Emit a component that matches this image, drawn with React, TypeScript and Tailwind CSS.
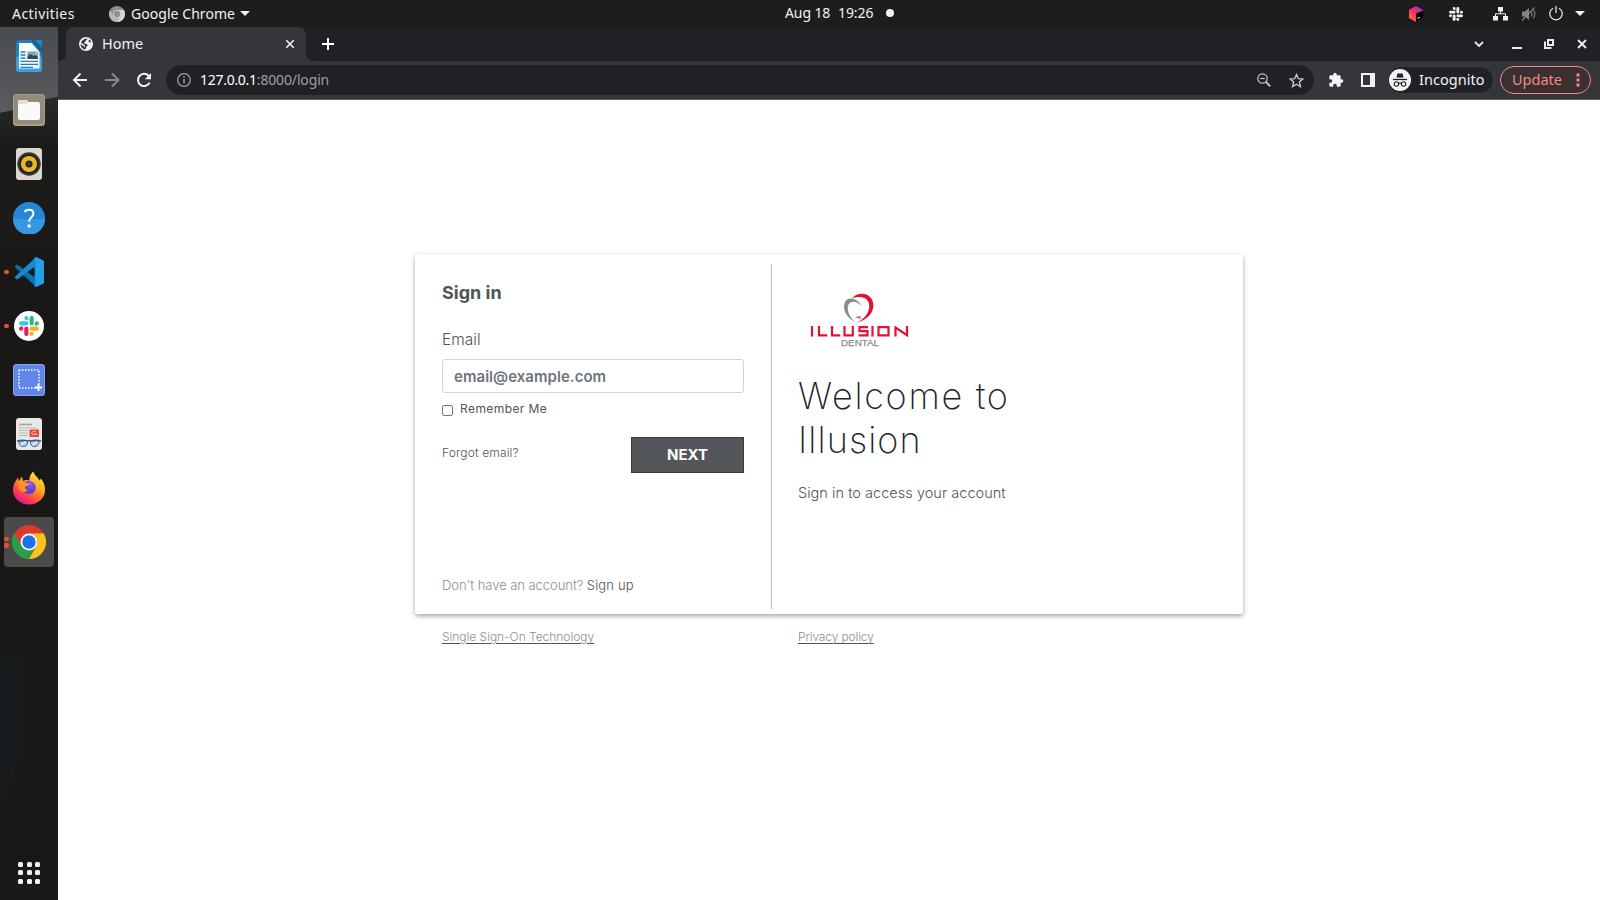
import type { ReactNode } from "react";

const ui = "font-['Noto_Sans',sans-serif]";

function ChromeLogo({ size, mono = false }: { size: number; mono?: boolean }) {
  const c = mono ? ["#8d8d8d", "#b5b5b5", "#d6d6d6", "#8f8f8f"] : ["#db3a2e", "#2a9d49", "#fcc31e", "#1b73e8"];
  return (
    <svg width={size} height={size} viewBox="0 0 48 48">
      <circle cx="24" cy="24" r="24" fill={c[0]} />
      <path d="M3.2 12A24 24 0 0 0 24 48L34.4 30A12 12 0 0 1 13.6 30Z" fill={c[1]} />
      <path d="M24 48A24 24 0 0 0 44.8 12H24A12 12 0 0 1 34.4 30Z" fill={c[2]} />
      <circle cx="24" cy="24" r="12" fill={mono ? "#d8d8d8" : "#fff"} />
      <circle cx="24" cy="24" r="9.5" fill={c[3]} />
    </svg>
  );
}

function SlackLogo({ size, white = false }: { size: number; white?: boolean }) {
  const [r, b, g, y] = white ? ["#eee", "#eee", "#eee", "#eee"] : ["#e01e5a", "#36c5f0", "#2eb67d", "#ecb22e"];
  return (
    <svg width={size} height={size} viewBox="0 0 24 24">
      <path fill={r} d="M5 15.2a2.5 2.5 0 1 1-2.5-2.5H5zm1.3 0a2.5 2.5 0 0 1 5 0v6.3a2.5 2.5 0 1 1-5 0z" />
      <path fill={b} d="M8.8 5a2.5 2.5 0 1 1 2.5-2.5V5zm0 1.3a2.5 2.5 0 0 1 0 5H2.5a2.5 2.5 0 1 1 0-5z" />
      <path fill={g} d="M19 8.8a2.5 2.5 0 1 1 2.5 2.5H19zm-1.3 0a2.5 2.5 0 0 1-5 0V2.5a2.5 2.5 0 1 1 5 0z" />
      <path fill={y} d="M15.2 19a2.5 2.5 0 1 1-2.5 2.5V19zm0-1.3a2.5 2.5 0 0 1 0-5h6.3a2.5 2.5 0 1 1 0 5z" />
    </svg>
  );
}

function WriterIcon() {
  return (
    <svg width="28" height="34" viewBox="0 0 28 34">
      <rect x="1" y="1" width="26" height="32" rx="3.5" fill="#1b80bd" />
      <rect x="1" y="17" width="26" height="16" rx="3.5" fill="#3ba1da" />
      <path d="M4 4h12.500L24.500 13v16.500H4z" fill="#fafafa" />
      <path d="M16.500 1H24l3 3v11z" fill="#155f92" />
      <path d="M20 1h7v8z" fill="#1a86c4" />
      <path d="M5.500 13h5M5.500 16h5M5.500 19h5M5.500 22.300h17.500M5.500 25.300h17.500M5.500 28.300h12.500" stroke="#1c80c2" strokeWidth="1.3" />
      <rect x="12.500" y="12.500" width="10.500" height="7.500" fill="#5aaee3" />
      <path d="M12.500 20v-3l3-2 3 2 2-1 2.500 2v2z" fill="#444" />
      <circle cx="21.200" cy="14.200" r="1.2" fill="#f0c420" />
    </svg>
  );
}

function FilesIcon() {
  return (
    <svg width="32" height="32" viewBox="0 0 32 32">
      <rect width="32" height="32" rx="3.5" fill="#aaa28e" />
      <rect x=".8" y=".8" width="30.4" height="29.5" rx="3" fill="#948c7b" />
      <path d="M5 8q0-2 2-2h6q1.500 0 2 2h10q2 0 2 2v14q0 2-2 2H7q-2 0-2-2z" fill="#fafafa" />
      <path d="M5 10V8q0-2 2-2h6q1.500 0 2 2l-2 2z" fill="#e2dfd8" />
    </svg>
  );
}

function RhythmboxIcon() {
  return (
    <svg width="28" height="34" viewBox="0 0 28 34">
      <rect x="1" y="1" width="26" height="32" rx="3" fill="#ddd7ce" />
      <circle cx="14" cy="17" r="11.7" fill="#34363a" />
      <circle cx="14" cy="17" r="10" fill="#202226" />
      <circle cx="14" cy="17" r="8" fill="#f0b818" />
      <circle cx="14" cy="17" r="3.6" fill="#1d2a33" />
      <circle cx="14" cy="17" r="1.3" fill="#454a4e" />
    </svg>
  );
}

function HelpIcon() {
  return (
    <svg width="32" height="32" viewBox="0 0 32 32">
      <circle cx="16" cy="16" r="16" fill="#2487d6" />
      <path d="M0 17h32a16 16 0 0 1-32 0z" fill="#3798e2" />
      <path d="M11.700 10c.8-1.600 2.400-2.200 4.300-2.200 2.700 0 4.400 1.400 4.400 3.700 0 3.900-4.300 3.800-4.300 8.200" fill="none" stroke="#fff" strokeWidth="2" />
      <circle cx="16.100" cy="24" r="1.7" fill="#fff" />
    </svg>
  );
}

function CodeIcon() {
  return (
    <svg width="30" height="30" viewBox="0 0 30 30">
      <path d="M.5 9.800L2.300 8q.9-.6 1.700 0L28.500 26 22 30z" fill="#0d6fb5" />
      <path d="M.5 20.200L2.300 22q.9.6 1.700 0L28.500 4 22 0z" fill="#1688cc" />
      <path d="M22 0l7 3.200q1 .5 1 1.500v20.600q0 1-1 1.500L22 30z" fill="#24a0ea" />
      <path d="M20.500.8L22 0v30l-1.500-.8z" fill="#1c92da" />
    </svg>
  );
}

function ScreenshotIcon() {
  return (
    <svg width="32" height="32" viewBox="0 0 32 32">
      <rect width="32" height="32" rx="3.5" fill="#5f86e8" />
      <rect x=".5" y=".5" width="31" height="31" rx="3" fill="none" stroke="#86a4f0" />
      <path d="M6 6h20v15M6 6v18h16" fill="none" stroke="#fff" strokeWidth="1.5" strokeDasharray="1.5 1.5" />
      <path d="M25.500 20v7M22 23.500h7" stroke="#fff" strokeWidth="1.8" />
    </svg>
  );
}

function ReaderIcon() {
  return (
    <svg width="28" height="34" viewBox="0 0 28 34">
      <rect x="1" y="1" width="26" height="32" rx="3" fill="#e9e8e6" />
      <path d="M4 7.500h13" stroke="#aaa793" strokeWidth="1.6" />
      <path d="M4 11h18M4 13.500h9M4 16h9M4 18.500h9" stroke="#bbb9b1" strokeWidth="1" />
      <rect x="14.500" y="12.500" width="9.500" height="7.500" fill="#ec4637" />
      <path d="M20.500 14.500c-3-.8-4 1-3.500 2.500s3 1 3.500-1v1.500h2" fill="none" stroke="#ffd5ce" strokeWidth=".8" />
      <path d="M2 24q5-1.500 10.500 0 1.500-1 3 0 5.500-1.500 10.500 0" fill="none" stroke="#2c5f9e" strokeWidth="1.6" />
      <path d="M4 24h8.500c.5 4-1.500 5.500-4.200 5.500S4 28 4 24zm11.500 0H24c0 4-1.500 5.500-4.300 5.500s-4.700-1.500-4.200-5.500z" fill="#b9cbdc" stroke="#2a568c" strokeWidth="1" />
      <path d="M6 28l4.500-3.500M17.500 28l4.500-3.500" stroke="#eef3f8" strokeWidth="1.2" />
    </svg>
  );
}

function FirefoxIcon() {
  return (
    <svg width="34" height="34" viewBox="0 0 34 34">
      <defs>
        <linearGradient id="fox" x1=".85" y1=".1" x2=".25" y2="1">
          <stop offset="0" stopColor="#ffe53b" />
          <stop offset=".4" stopColor="#ff9a1f" />
          <stop offset=".72" stopColor="#ff4050" />
          <stop offset="1" stopColor="#e0128f" />
        </linearGradient>
        <radialGradient id="orb" cx=".6" cy=".2">
          <stop offset="0" stopColor="#a05af0" />
          <stop offset="1" stopColor="#5b48c8" />
        </radialGradient>
      </defs>
      <path d="M6 6.500l.8 3.500 3.200-4.500 1 4.500c3-1.500 5-1 6.500-.5C17 6 19 2.500 21.500.5c.5 4 4 5 6 9l1.500-2c3 4 4 7.500 4 11.500a16 14.500 0 0 1-32 0C1 13.500 3.500 10 6 6.500z" fill="url(#fox)" />
      <circle cx="17" cy="16.5" r="6.800" fill="url(#orb)" />
      <path d="M6 10.500c3-1.500 6-.5 7.500 1.500l4 .5c0 1.800-4 2.500-4.500 3.500-.3 2 1 3 3 3-3 3-7 1.500-8 0-2-2.500-2-5-2-8.500z" fill="#ff9420" />
      <path d="M17 9.500c3 1 5 1 7 3l1.500 6c1-4-.5-7-3.500-9.500z" fill="#ffc52c" />
    </svg>
  );
}

function DockItem({ children, dots = 0, active = false }: { children: ReactNode; dots?: number; active?: boolean }) {
  return (
    <div className="relative flex h-[54px] w-full items-center justify-center">
      {active && <div className="absolute top-[2px] left-1 h-[50px] w-[50px] rounded-[4px] bg-[#4a4a4a]" />}
      <div className="relative">{children}</div>
      {dots > 0 && (
        <div className="absolute inset-y-0 left-1 flex flex-col justify-center gap-[2px]">
          <i className="size-[4.5px] rounded-full bg-[#e95420]" />
          {dots > 1 && <i className="size-[4.5px] rounded-full bg-[#e95420]" />}
        </div>
      )}
    </div>
  );
}

function Dock() {
  return (
    <aside className="relative flex w-[58px] shrink-0 flex-col bg-[#191817] pt-[2px]">
      <svg className="absolute inset-0" width="58" height="873" viewBox="0 0 58 873">
        <defs>
          <linearGradient id="sky" x1="0" y1="0" x2="0" y2="1">
            <stop offset="0" stopColor="#484b50" />
            <stop offset="1" stopColor="#5a5b5d" />
          </linearGradient>
          <linearGradient id="hill" x1="0" y1="0" x2="0" y2="1">
            <stop offset="0" stopColor="#272b23" />
            <stop offset=".35" stopColor="#1b1b1a" />
            <stop offset="1" stopColor="#1b1a17" />
          </linearGradient>
          <linearGradient id="lake" x1="0" y1="0" x2="1" y2="0">
            <stop offset="0" stopColor="#171c1f" />
            <stop offset="1" stopColor="#191918" />
          </linearGradient>
        </defs>
        <path d="M0 0h58v70l-16 3-22 9-20 4z" fill="url(#sky)" />
        <path d="M0 86l20-4 22-9 16-3v150H0z" fill="url(#hill)" />
        <path d="M0 630h23v90L6 770l-6 5z" fill="url(#lake)" />
      </svg>
      <DockItem><WriterIcon /></DockItem>
      <DockItem><FilesIcon /></DockItem>
      <DockItem><RhythmboxIcon /></DockItem>
      <DockItem><HelpIcon /></DockItem>
      <DockItem dots={1}><CodeIcon /></DockItem>
      <DockItem dots={1}>
        <div className="flex size-[30px] items-center justify-center rounded-full bg-white"><SlackLogo size={20} /></div>
      </DockItem>
      <DockItem><ScreenshotIcon /></DockItem>
      <DockItem><ReaderIcon /></DockItem>
      <DockItem><FirefoxIcon /></DockItem>
      <DockItem dots={2} active><ChromeLogo size={34} /></DockItem>
      <div className="relative mt-auto mb-4 grid grid-cols-3 gap-[3.7px] self-center">
        {Array.from({ length: 9 }, (_, i) => <i key={i} className="size-[5px] rounded-[1.5px] bg-[#f2f2f2]" />)}
      </div>
    </aside>
  );
}

function TopBar() {
  return (
    <header className={`relative flex h-[27px] shrink-0 items-center bg-[#1d1d1d] text-[14px] leading-[27px] text-[#f2f2f2] ${ui}`}>
      <span className="ml-3 w-[97px] tracking-[0.45px]">Activities</span>
      <ChromeLogo size={16} mono />
      <span className="ml-[6px] tracking-[0.05px]">Google Chrome</span>
      <svg className="ml-[5px]" width="10" height="5" viewBox="0 0 10 5"><path d="M0 0h10L5 5z" fill="#f2f2f2" /></svg>
      <div className="absolute top-0 left-[785px] flex h-[26px] items-center leading-[26px]">
        <span className="w-[53px] tracking-[-0.1px]">Aug 18</span>
        <span className="w-[48px] tracking-[-0.1px]">19:26</span>
        <i className="size-2 rounded-full bg-[#f2f2f2]" />
      </div>
      <div className="ml-auto flex items-center pr-[15px]">
        <svg width="14" height="16" viewBox="0 0 14 16">
          <defs><linearGradient id="jb" x1="0" y1="1" x2="1" y2="0"><stop offset="0" stopColor="#ff8a1e" /><stop offset=".45" stopColor="#fc2d63" /><stop offset="1" stopColor="#8a2be8" /></linearGradient></defs>
          <path d="M7 0l7 4v8l-7 4-7-4V4z" fill="url(#jb)" />
          <path d="M7 7.500L14 4.800V12l-7 4z" fill="#000" />
          <path d="M8.500 12.500l2.500-1.300" stroke="#fff" strokeWidth="1" />
        </svg>
        <div className="ml-[26px]"><SlackLogo size={14} white /></div>
        <svg className="ml-[30px]" width="15" height="14" viewBox="0 0 15 14">
          <path d="M5 0h5v4.500H5zM0 9h5v4.500H0zM10 9h5v4.500h-5z" fill="#f2f2f2" />
          <path d="M7.500 4v3M2.500 9V6.800h10V9" fill="none" stroke="#f2f2f2" />
        </svg>
        <svg className="ml-[13px]" width="16" height="14" viewBox="0 0 16 14">
          <path d="M1 4.500h3L8 1v12L4 9.500H1z" fill="#858585" />
          <path d="M10 4.500q2 2.500 0 5M12.200 2.500q3.300 4.500 0 9M1 13.500L13.500.5" fill="none" stroke="#858585" strokeWidth="1.1" />
        </svg>
        <svg className="ml-[12px]" width="14" height="15" viewBox="0 0 14 15">
          <path d="M4 2.200a6.200 6.200 0 1 0 6 0M7 0v7" fill="none" stroke="#eee" strokeWidth="1.2" />
        </svg>
        <svg className="ml-[12px]" width="10" height="5" viewBox="0 0 10 5"><path d="M0 0h10L5 5z" fill="#f2f2f2" /></svg>
      </div>
    </header>
  );
}

function TabStrip() {
  return (
    <div className="flex h-[34px] items-center bg-[#202124] text-[#f1f3f4]">
      <svg className="self-end" width="8" height="8" viewBox="0 0 8 8"><path d="M8 0v8H0q8 0 8-8z" fill="#35363a" /></svg>
      <div className="flex h-full w-[240px] items-center rounded-t-[8px] bg-[#35363a] pr-[11px] pl-[13px]">
        <svg width="14" height="14" viewBox="0 0 14 14">
          <circle cx="7" cy="7" r="7" fill="#f1f3f4" />
          <path d="M8.300 1.500c.3 1.500-1.800 1.300-1.800 2.700 0 .8-1.500.8-1.500 1.800s2 .5 3 1.200c1.200.8.500 1.800-.3 2.300-.8.400-.5 2-1.500 3C3.500 12 1.500 10 1.500 7.200c1.300 0 1.500 1.300 2.700 1.500.8.300 1 1 1 1.800.8-.5.800-2 .3-2.500C4.500 7 3.500 6.500 2 6c.5-2.500 3-4.800 6.300-4.500zM9.500 4c0 1.500 1.500 1.200 2.800 1.200C11.800 3.800 11 2.800 10 2.200c.3.800-.5 1-.5 1.800z" fill="#35363a" />
        </svg>
        <span className={`ml-[9px] h-[34px] text-[14.5px] leading-[33px] ${ui}`}>Home</span>
        <svg className="ml-auto" width="10" height="10" viewBox="0 0 10 10"><path d="M1.300 1.300l7.400 7.400M8.700 1.300L1.300 8.700" stroke="#f1f3f4" strokeWidth="1.6" /></svg>
      </div>
      <svg className="self-end" width="8" height="8" viewBox="0 0 8 8"><path d="M0 0v8h8q-8 0-8-8z" fill="#35363a" /></svg>
      <svg className="ml-2" width="12" height="12" viewBox="0 0 12 12"><path d="M6 0v12M0 6h12" stroke="#fff" strokeWidth="2" /></svg>
      <div className="ml-auto flex items-center pr-[13px]">
        <svg width="10" height="7" viewBox="0 0 10 7"><path d="M1 1l4 4 4-4" fill="none" stroke="#e8eaed" strokeWidth="1.8" /></svg>
        <svg className="ml-[28px]" width="10" height="10" viewBox="0 0 10 10"><path d="M0 9h10" stroke="#e8eaed" strokeWidth="2" /></svg>
        <svg className="ml-[22px]" width="10" height="10" viewBox="0 0 10 10"><path d="M4 1h5v5H4zM1 2.500V9h6.500" fill="none" stroke="#e8eaed" strokeWidth="2" /></svg>
        <svg className="ml-[23px]" width="10" height="10" viewBox="0 0 10 10"><path d="M1 1l8 8M9 1L1 9" stroke="#e8eaed" strokeWidth="2" /></svg>
      </div>
    </div>
  );
}

function Toolbar() {
  return (
    <div className={`flex h-[39px] items-center border-b border-[#606164] bg-[#35363a] pl-[14px] ${ui}`}>
      <svg width="16" height="16" viewBox="0 0 16 16"><path d="M15 8H2.500M8.500 1.500L2 8l6.500 6.500" fill="none" stroke="#f1f3f4" strokeWidth="2" /></svg>
      <svg className="ml-[17px]" width="16" height="16" viewBox="0 0 16 16"><path d="M0 8h12.500M7 1.500L13.500 8 7 14.500" fill="none" stroke="#85878b" strokeWidth="2" /></svg>
      <svg className="ml-[15px]" width="16" height="16" viewBox="0 0 16 16">
        <path d="M13.600 10.600A6.100 6.100 0 1 1 12.600 3.800" fill="none" stroke="#f1f3f4" strokeWidth="2" />
        <path d="M15 1v6.200H8.800z" fill="#f1f3f4" />
      </svg>
      <div className="ml-[14px] flex h-[30px] w-[1148px] items-center rounded-full bg-[#202124] pr-[10px] pl-[11px]">
        <svg width="14" height="14" viewBox="0 0 14 14"><circle cx="7" cy="7" r="6.3" fill="none" stroke="#9aa0a6" strokeWidth="1.3" /><path d="M7 6v4.500M7 3.300v1.500" stroke="#9aa0a6" strokeWidth="1.5" /></svg>
        <span className="ml-[9px] text-[14px] leading-[30px] tracking-[-0.28px] text-[#9aa0a6]"><span className="text-[#fff]">127.0.0.1</span><span className="tracking-[-0.15px]">:8000/login</span></span>
        <svg className="ml-auto" width="14" height="14" viewBox="0 0 14 14"><circle cx="5.500" cy="5.500" r="4.700" fill="none" stroke="#c4c7c9" strokeWidth="1.2" /><path d="M9 9l4.300 4.300" stroke="#c4c7c9" strokeWidth="1.8" /><path d="M3.200 5.500h4.600" stroke="#c4c7c9" strokeWidth="1.2" /></svg>
        <svg className="ml-[18px]" width="15" height="15" viewBox="0 0 15 15"><path d="M7.500 1.500l1.800 4.200 4.500.4-3.400 3 1 4.500-3.900-2.400-3.900 2.400 1-4.500-3.400-3 4.500-.4z" fill="none" stroke="#c4c7c9" strokeWidth="1.4" /></svg>
      </div>
      <svg className="ml-[14px]" width="16" height="16" viewBox="0 0 24 24"><path fill="#f1f3f4" d="M20.500 11H19V7c0-1.100-.9-2-2-2h-4V3.500a2.500 2.500 0 0 0-5 0V5H4c-1.100 0-2 .9-2 2v3.800h1.500c1.500 0 2.700 1.200 2.700 2.700S5 16.200 3.500 16.200H2V20c0 1.100.9 2 2 2h3.800v-1.500c0-1.500 1.200-2.700 2.700-2.700s2.700 1.200 2.700 2.700V22H17c1.100 0 2-.9 2-2v-4h1.500a2.500 2.500 0 0 0 0-5z" /></svg>
      <svg className="ml-[17px]" width="14" height="14" viewBox="0 0 14 14"><path d="M0 0h14v14H0zM2 2v10h7V2z" fill="#f1f3f4" fillRule="evenodd" /></svg>
      <div className="ml-[12px] flex h-[28px] w-[107px] items-center rounded-full border border-[#3d3e42] bg-[#202124] pl-px">
        <svg width="22" height="22" viewBox="0 0 22 22">
          <circle cx="11" cy="11" r="11" fill="#f1f3f4" />
          <path d="M7.500 8.500l1-4.200q2.500.8 5 0l1 4.200z" fill="#202124" />
          <path d="M4 10.500h14" stroke="#202124" strokeWidth="1.3" />
          <path d="M9.700 14.500q1.300-.8 2.600 0" fill="none" stroke="#202124" strokeWidth="1.1" />
          <circle cx="7.400" cy="15" r="2.200" fill="none" stroke="#202124" strokeWidth="1.1" />
          <circle cx="14.600" cy="15" r="2.200" fill="none" stroke="#202124" strokeWidth="1.1" />
        </svg>
        <span className="ml-[8px] h-[26px] text-[14.5px] leading-[25px] tracking-[0.05px] text-[#f1f3f4]">Incognito</span>
      </div>
      <div className="ml-[6px] flex h-[28px] w-[91px] items-center rounded-full border border-[#f28b82] bg-[#3a2f31] pl-[11px] text-[#f28b82]">
        <span className="h-[26px] text-[14.5px] leading-[25px]">Update</span>
        <svg className="ml-[14.5px]" width="4" height="14" viewBox="0 0 4 14"><path d="M.5.500h3v3h-3zM.5 5.500h3v3h-3zM.5 10.500h3v3h-3z" fill="#f28b82" /></svg>
      </div>
    </div>
  );
}

function IllusionLogo() {
  return (
    <svg width="100" height="54" viewBox="0 0 100 54">
      <path d="M42 5.500C44.500 1.500 50 0 54.500 1 61 2.500 64 8 63.300 14 62.500 21 57 26.500 47.500 29.500 55 25 59 20 59.300 13.500 59.500 6.500 53 1.500 42 5.500z" fill="#e1123a" />
      <path d="M45 29C37 25 32.500 17 34.500 10.500 36.500 4 45 3 52 13 46 7.500 40.500 7.500 38.300 12 36.500 17 39.500 24 45 29z" fill="#8b8b8b" />
      <path d="M44.500 26q3-4.500 6.500-2.500l-1 3q-2-2.500-5.500-.5z" fill="#8b8b8b" />
      <g fill="none" stroke="#e1123a" strokeWidth="2.2">
        <path d="M2 33v10.500M9 33v9.400h8.300M22 33v9.400h8.300M34.500 33v9.400h8.300V33M58 34.100h-8.500v4.100h8v4.200h-9M62.500 33v10.500" />
        <rect x="68.500" y="34.100" width="10" height="8.300" />
        <path d="M85.500 43.500V34.500l11.500 7.700V33" />
      </g>
      <text x="31" y="53" fontFamily="Liberation Sans" fontSize="9.8" textLength="38" lengthAdjust="spacingAndGlyphs" fill="#8b8b8b" stroke="#8b8b8b" strokeWidth=".25">DENTAL</text>
    </svg>
  );
}

function LoginPage() {
  return (
    <main className="flex flex-1 flex-col bg-white pt-[154px] pl-[357px] font-['Inter',sans-serif] text-[#505457]">
      <section className="flex h-[360px] w-[828px] rounded-[2px] shadow-[0_2px_5px_rgba(0,0,0,0.36)]">
        <div className="flex w-[356px] flex-col pt-[26px] pl-[27px]">
          <h2 className="text-[18px] leading-[25px] font-bold">Sign in</h2>
          <label className="mt-[23px] text-[15.5px] leading-6 font-light">Email</label>
          <input className="mt-[7px] h-[34px] w-[302px] rounded-[3px] border border-[#ced4da] px-[11px] text-[15px] font-semibold tracking-[0.05px] placeholder:text-[#6c757d]" placeholder="email@example.com" />
          <label className="mt-2 flex h-4 text-[12px] leading-4 tracking-[0.42px]">
            <input type="checkbox" className="mt-1 mr-[7px] size-[11px] appearance-none rounded-[2px] border border-[#767676] bg-white" />
            Remember Me
          </label>
          <div className="mt-[20px] flex h-9 w-[302px] justify-between">
            <a className="pt-2 text-[12px] leading-4 font-light tracking-[0.15px]">Forgot email?</a>
            <button className="w-[113px] border border-[#343a40] bg-[#535759] text-[15px] font-bold text-white">NEXT</button>
          </div>
          <p className="mt-auto mb-[19px] text-[13px] leading-5 font-light tracking-[-0.05px] text-[#8b8e90]">Don't have an account? <a className="tracking-[0.15px] text-[#505457]">Sign up</a></p>
        </div>
        <div className="mt-[10px] h-[345px] w-px bg-[#bfc1c2]" />
        <div className="flex flex-col pl-[26px]">
          <div className="mt-[39px] ml-[12px] h-[54px]"><IllusionLogo /></div>
          <h1 className="mt-[27px] w-[260px] text-[36px] leading-[44px] font-extralight tracking-[1.7px] text-[#212529]">
            Welcome to <span className="tracking-[1.1px]">Illusion</span>
          </h1>
          <p className="mt-[19px] text-[14.5px] leading-6 font-light tracking-[0.03px]">Sign in to access your account</p>
        </div>
      </section>
      <footer className="mt-[15px] flex pl-[27px] text-[12px] leading-4 font-light text-[#8b8e90]">
        <a className="w-[356px] tracking-[-0.03px] underline decoration-[#505457] underline-offset-2">Single Sign-On Technology</a>
        <a className="tracking-[-0.13px] underline decoration-[#505457] underline-offset-2">Privacy policy</a>
      </footer>
    </main>
  );
}

export default function App() {
  return (
    <div className="flex h-[900px] w-[1600px] flex-col overflow-hidden">
      <TopBar />
      <div className="flex min-h-0 flex-1">
        <Dock />
        <div className="flex min-w-0 flex-1 flex-col">
          <TabStrip />
          <Toolbar />
          <LoginPage />
        </div>
      </div>
    </div>
  );
}
